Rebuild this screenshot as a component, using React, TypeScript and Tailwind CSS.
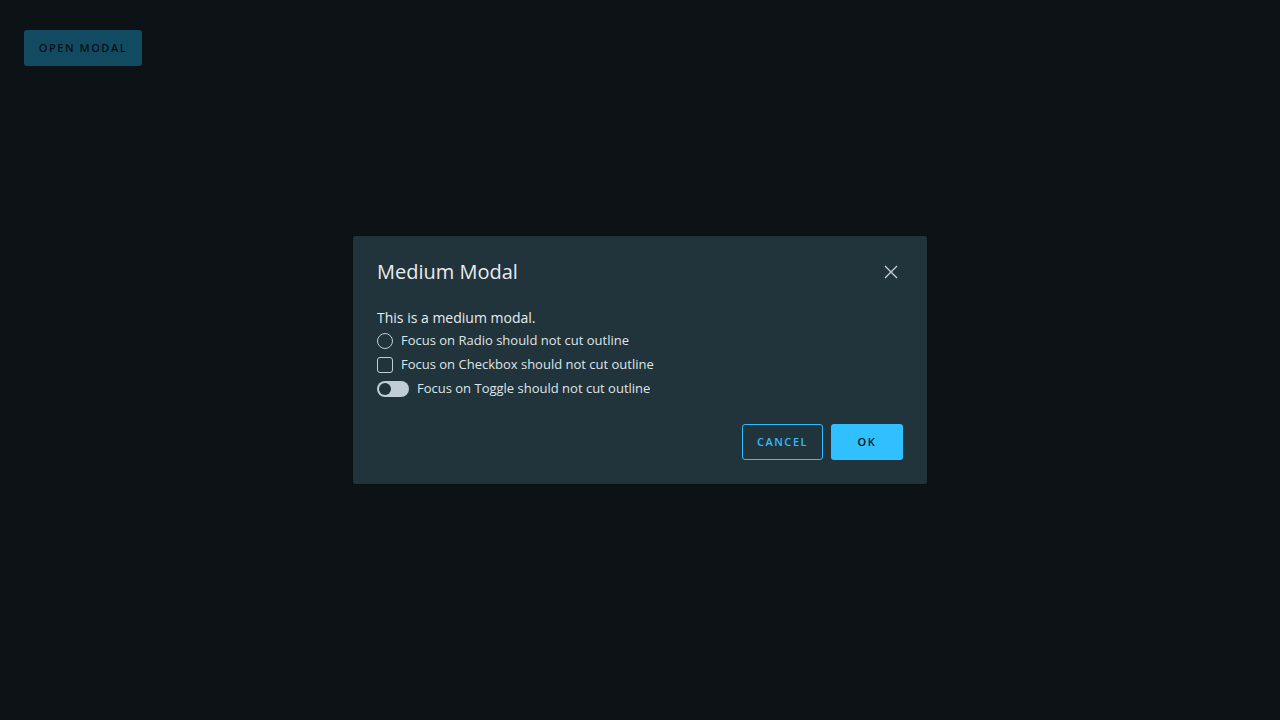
import React from "react";

const font = { fontFamily: "'Open Sans', Lato, sans-serif" };

export default function App() {
    return (
        <div className="relative w-[1280px] h-[720px] bg-[#0c1216] overflow-hidden" style={font}>
            <div className="pt-[30px] pl-[24px]">
                <button className="h-[36px] w-[118px] rounded-[3px] bg-[#124a62] text-[#061015] text-[11px] font-semibold tracking-[0.14em] uppercase">
                    Open Modal
                </button>
            </div>

            <div className="absolute left-[352px] top-[235px] w-[576px] h-[250px] bg-[#21333b] border border-[#081014] rounded-[3px] px-[24px] pt-[24px] pb-[24px] flex flex-col">
                <div className="flex items-center justify-between h-[24px]">
                    <h3 className="text-[20px] text-[#e9ecef] leading-[24px]">Medium Modal</h3>
                    <button className="w-[20px] h-[20px] mr-[2px] flex items-center justify-center text-[#c7d1d6]">
                        <svg width="16" height="16" viewBox="0 0 16 16" fill="none" stroke="currentColor" strokeWidth="1.3">
                            <path d="M2 2 L14 14 M14 2 L2 14" />
                        </svg>
                    </button>
                </div>
                <div className="mt-[24px] text-[#e9ecef]">
                    <p className="text-[14px] leading-[20px]">This is a medium modal.</p>
                    <div className="flex flex-col gap-[8px] mt-[5px] text-[13px] text-[#dfe5e8]">
                        <label className="flex items-center h-[16px] gap-[8px]">
                            <span className="w-[16px] h-[16px] rounded-full border border-[#c1cdd4]" />
                            Focus on Radio should not cut outline
                        </label>
                        <label className="flex items-center h-[16px] gap-[8px]">
                            <span className="w-[16px] h-[16px] rounded-[3px] border border-[#c1cdd4]" />
                            Focus on Checkbox should not cut outline
                        </label>
                        <label className="flex items-center h-[16px] gap-[8px]">
                            <span className="w-[32px] h-[16px] rounded-full bg-[#c1cdd4] flex items-center pl-[2px]">
                                <span className="w-[12px] h-[12px] rounded-full bg-[#21333b]" />
                            </span>
                            Focus on Toggle should not cut outline
                        </label>
                    </div>
                </div>
                <div className="mt-auto flex justify-end gap-[8px]">
                    <button className="h-[36px] w-[81px] rounded-[3px] border border-[#2ebcff] text-[#2ebcff] text-[11px] font-semibold tracking-[0.14em]">
                        CANCEL
                    </button>
                    <button className="h-[36px] w-[72px] rounded-[3px] bg-[#30bfff] text-[#061015] text-[11px] font-semibold tracking-[0.14em]">
                        OK
                    </button>
                </div>
            </div>
        </div>
    );
}
